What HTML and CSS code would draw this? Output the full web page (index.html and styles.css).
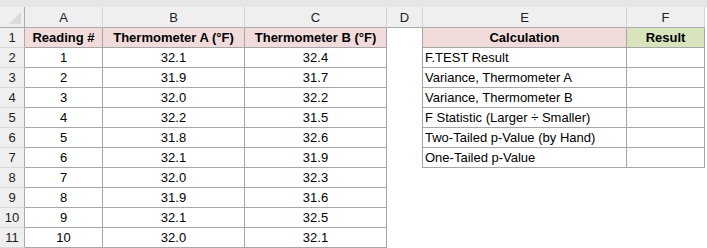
FILE: index.html
```html
<!DOCTYPE html>
<html>
<head>
<meta charset="utf-8">
<link rel="stylesheet" href="styles.css">
</head>
<body>
<div class="topbar"></div>
<div class="sheet">
  <div class="corner"><span class="tri"></span></div>
  <div class="ch">A</div><div class="ch">B</div><div class="ch">C</div><div class="ch">D</div><div class="ch">E</div><div class="ch">F</div>

  <div class="rh">1</div>
  <div class="c t hp b">Reading #</div><div class="c t hp b">Thermometer A (°F)</div><div class="c t hp b">Thermometer B (°F)</div>
  <div class="c dr"></div><div class="c t hp b">Calculation</div><div class="c t hg b">Result</div>

  <div class="rh">2</div>
  <div class="c t">1</div><div class="c t">32.1</div><div class="c t">32.4</div>
  <div class="c dr"></div><div class="c t l">F.TEST Result</div><div class="c t"></div>

  <div class="rh">3</div>
  <div class="c t">2</div><div class="c t">31.9</div><div class="c t">31.7</div>
  <div class="c dr"></div><div class="c t l">Variance, Thermometer A</div><div class="c t"></div>

  <div class="rh">4</div>
  <div class="c t">3</div><div class="c t">32.0</div><div class="c t">32.2</div>
  <div class="c dr"></div><div class="c t l">Variance, Thermometer B</div><div class="c t"></div>

  <div class="rh">5</div>
  <div class="c t">4</div><div class="c t">32.2</div><div class="c t">31.5</div>
  <div class="c dr"></div><div class="c t l">F Statistic (Larger ÷ Smaller)</div><div class="c t"></div>

  <div class="rh">6</div>
  <div class="c t">5</div><div class="c t">31.8</div><div class="c t">32.6</div>
  <div class="c dr"></div><div class="c t l">Two-Tailed p-Value (by Hand)</div><div class="c t"></div>

  <div class="rh">7</div>
  <div class="c t">6</div><div class="c t">32.1</div><div class="c t">31.9</div>
  <div class="c dr"></div><div class="c t l">One-Tailed p-Value</div><div class="c t"></div>

  <div class="rh">8</div>
  <div class="c t">7</div><div class="c t">32.0</div><div class="c t">32.3</div>
  <div class="c"></div><div class="c"></div><div class="c"></div>

  <div class="rh">9</div>
  <div class="c t">8</div><div class="c t">31.9</div><div class="c t">31.6</div>
  <div class="c"></div><div class="c"></div><div class="c"></div>

  <div class="rh">10</div>
  <div class="c t">9</div><div class="c t">32.1</div><div class="c t">32.5</div>
  <div class="c"></div><div class="c"></div><div class="c"></div>

  <div class="rh">11</div>
  <div class="c t">10</div><div class="c t">32.0</div><div class="c t">32.1</div>
  <div class="c"></div><div class="c"></div><div class="c"></div>
</div>
</body>
</html>
```

FILE: styles.css
```css
html, body {
  margin: 0;
  padding: 0;
  background: #ffffff;
}
body {
  font-family: "Liberation Sans", Arial, sans-serif;
  font-size: 13px;
  color: #000;
  width: 707px;
  height: 248px;
  overflow: hidden;
}
.topbar {
  height: 7px;
  background: #e6e6e6;
}
.sheet {
  display: grid;
  grid-template-columns: 25px 78px 142px 142px 36px 204px 78px;
  grid-template-rows: 21px repeat(11, 20px);
}
.corner {
  background: #efefef;
  border-right: 1px solid #ababab;
  border-bottom: 1px solid #ababab;
  position: relative;
}
.tri {
  position: absolute;
  right: 3px;
  bottom: 3px;
  width: 0;
  height: 0;
  border-left: 12px solid transparent;
  border-bottom: 12px solid #dadada;
}
.ch {
  background: #efefef;
  border-right: 1px solid #d4d4d4;
  border-bottom: 1px solid #ababab;
  display: flex;
  align-items: center;
  justify-content: center;
  color: #222;
  padding-top: 1px;
}
.rh {
  background: #efefef;
  border-right: 1px solid #ababab;
  border-bottom: 1px solid #d9d9d9;
  display: flex;
  align-items: center;
  justify-content: center;
  color: #222;
}
.c {
  display: flex;
  align-items: center;
  justify-content: center;
  white-space: nowrap;
  box-sizing: border-box;
}
.t {
  border-right: 1px solid #a6a6a6;
  border-bottom: 1px solid #a6a6a6;
}
.dr {
  border-right: 1px solid #a6a6a6;
}
.l {
  justify-content: flex-start;
  padding-left: 2px;
}
.hp { background: #f2dcdb; }
.hg { background: #d8e4bc; }
.b { font-weight: bold; }
```
